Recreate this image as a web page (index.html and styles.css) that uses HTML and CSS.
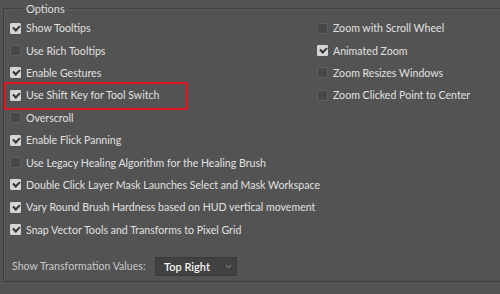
FILE: index.html
```html
<!DOCTYPE html>
<html>
<head>
<meta charset="utf-8">
<link rel="stylesheet" href="styles.css">
</head>
<body>
<fieldset class="options">
  <legend class="legend">Options</legend>
  <div class="cols">
    <div class="col col-left">
      <label class="row"><span class="box on"></span>Show Tooltips</label>
      <label class="row"><span class="box"></span>Use Rich Tooltips</label>
      <label class="row"><span class="box on"></span>Enable Gestures</label>
      <label class="row hl"><span class="box on"></span>Use Shift Key for Tool Switch</label>
      <label class="row"><span class="box"></span>Overscroll</label>
      <label class="row"><span class="box on"></span>Enable Flick Panning</label>
      <label class="row"><span class="box"></span>Use Legacy Healing Algorithm for the Healing Brush</label>
      <label class="row"><span class="box on"></span>Double Click Layer Mask Launches Select and Mask Workspace</label>
      <label class="row"><span class="box on"></span>Vary Round Brush Hardness based on HUD vertical movement</label>
      <label class="row"><span class="box on"></span>Snap Vector Tools and Transforms to Pixel Grid</label>
    </div>
    <div class="col col-right">
      <label class="row"><span class="box"></span>Zoom with Scroll Wheel</label>
      <label class="row"><span class="box on"></span>Animated Zoom</label>
      <label class="row"><span class="box"></span>Zoom Resizes Windows</label>
      <label class="row"><span class="box"></span>Zoom Clicked Point to Center</label>
    </div>
  </div>
  <div class="transform">
    <span class="tlabel">Show Transformation Values:</span>
    <div class="select">
      <span class="sval">Top Right</span>
      <svg class="chev" width="7" height="5" viewBox="0 0 7 5"><path d="M0.8 1 L3.5 3.6 L6.2 1" fill="none" stroke="#9a9a9a" stroke-width="1"/></svg>
    </div>
  </div>
</fieldset>
</body>
</html>
```
FILE: styles.css
```css
html, body {
  margin: 0;
  padding: 0;
  background: #535353;
  width: 500px;
  height: 294px;
  overflow: hidden;
}
body {
  font-family: Lato, "Liberation Sans", Arial, sans-serif;
  font-size: 10.6px;
  color: #e0e0e0;
}
.options {
  margin: 2px -20px 0 3px;
  padding: 2px 0 0 6px;
  height: 280px;
  border: 1px solid #3f3f3f;
  box-shadow: inset 1px 1px 0 #5a5a5a;
  box-sizing: border-box;
}
.legend {
  margin-left: 13px;
  padding: 0 3px;
  font-size: 11px;
  color: #dcdcdc;
}
.cols {
  display: flex;
}
.col-left {
  width: 307px;
}
.col {
  display: flex;
  flex-direction: column;
}
.row {
  display: flex;
  align-items: center;
  height: 22.4px;
  white-space: nowrap;
  position: relative;
}
.row.hl::after {
  content: "";
  position: absolute;
  left: -6px;
  top: -2px;
  width: 180px;
  height: 24px;
  border: 2px solid #e3141c;
}
.box {
  width: 11px;
  height: 11px;
  box-sizing: border-box;
  margin-right: 5px;
  background: #484848;
  border: 1px solid #5e5e5e;
  border-radius: 1px;
  flex: none;
  position: relative;
}
.box.on {
  background: #d4d4d4;
  border-color: #d4d4d4;
}
.box.on::after {
  content: "";
  position: absolute;
  left: 2px;
  top: 1px;
  width: 5px;
  height: 3px;
  border-left: 2px solid #333;
  border-bottom: 2px solid #333;
  transform: rotate(-45deg);
}
.transform {
  display: flex;
  align-items: center;
  margin-top: 16px;
  padding-left: 2px;
}
.tlabel {
  color: #c8c8c8;
  width: 143px;
  white-space: nowrap;
}
.select {
  display: flex;
  align-items: center;
  justify-content: space-between;
  width: 82px;
  height: 19px;
  box-sizing: border-box;
  padding: 0 4px 0 8px;
  background: #414141;
  border: 1px solid #3a3a3a;
}
.sval {
  color: #f4f4f4;
  font-size: 11px;
  font-weight: 600;
}
.chev {
  display: block;
}
```
